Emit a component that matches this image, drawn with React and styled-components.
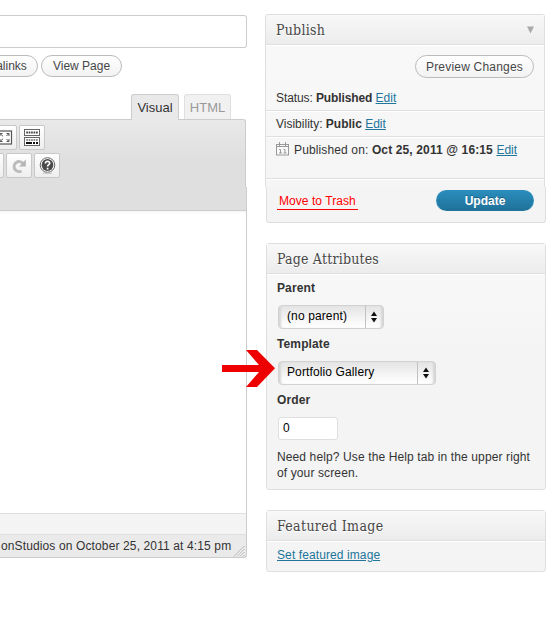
import React from 'react';
import styled, { createGlobalStyle } from 'styled-components';

const Global = createGlobalStyle`
  *, *::before, *::after { box-sizing: border-box; }
  body { margin: 0; background: #fff; }
`;

const Page = styled.main`
  position: relative;
  display: flex;
  align-items: flex-start;
  width: 556px;
  height: 624px;
  overflow: hidden;
  background: #fff;
  color: #333;
  font: 12px/16px 'Liberation Sans', Arial, sans-serif;
`;

const EditorColumn = styled.section`
  width: 247px;
  padding-top: 15px;
`;

const TitleField = styled.div`
  height: 33px;
  border: 1px solid #ccc;
  border-left: 0;
  border-radius: 0 3px 3px 0;
  background: #fff;
`;

const PermalinkRow = styled.div`
  display: flex;
  gap: 3px;
  margin-top: 7px;
  height: 22px;
`;

const PillButton = styled.button`
  flex: none;
  width: ${(p) => p.$width}px;
  height: ${(p) => p.$height || 22}px;
  margin-left: ${(p) => p.$offset || 0}px;
  padding: 0;
  border: 1px solid #bbb;
  border-radius: 12px;
  background: linear-gradient(#fff, #f2f2f2);
  color: #464646;
  font: inherit;
  line-height: 20px;
  letter-spacing: ${(p) => p.$spacing || 0}px;
  text-shadow: 0 1px 0 #fff;
  white-space: nowrap;
`;

const Tabs = styled.div`
  display: flex;
  gap: 5px;
  margin-top: 17px;
  padding-left: 131px;
`;

const Tab = styled.div`
  width: ${(p) => p.$width}px;
  height: ${(p) => (p.$active ? 26 : 25)}px;
  margin-bottom: ${(p) => (p.$active ? -1 : 0)}px;
  border: 1px solid ${(p) => (p.$active ? '#ccc' : '#dfdfdf')};
  border-bottom: 0;
  border-radius: 3px 3px 0 0;
  background: ${(p) => (p.$active ? '#e9e9e9' : '#f1f1f1')};
  color: ${(p) => (p.$active ? '#333' : '#999')};
  font-size: 13px;
  line-height: 25px;
  text-align: center;
  z-index: 1;
`;

const Toolbar = styled.div`
  width: 246px;
  height: 68px;
  padding-top: 5px;
  border-top: 1px solid #ccc;
  border-right: 1px solid #ccc;
  border-radius: 0 3px 0 0;
  background: linear-gradient(#e9e9e9, #dfdfdf 60%);
`;

const ToolRow = styled.div`
  display: flex;
  gap: 2px;
  height: 28px;
  margin-left: ${(p) => p.$offset}px;
`;

const Tool = styled.button`
  display: flex;
  align-items: center;
  justify-content: center;
  flex: none;
  width: 26px;
  height: 25px;
  padding: 0;
  border: 1px solid #c8c8c8;
  border-radius: 2px;
  background: linear-gradient(#fff, #eee);
  svg { display: block; }
`;

const ToolbarFoot = styled.div`
  height: 24px;
  border-right: 1px solid #ccc;
  border-bottom: 1px solid #ccc;
  background: #dfdfdf;
`;

const Canvas = styled.div`
  height: 302px;
  border-right: 1px solid #ccc;
  background: linear-gradient(#f5f5f5, #fff 3px);
`;

const PathBar = styled.div`
  height: 21px;
  border-top: 1px solid #dfdfdf;
  border-right: 1px solid #ccc;
  background: #f4f4f4;
`;

const StatusBar = styled.div`
  display: flex;
  justify-content: space-between;
  height: 24px;
  padding-left: 1px;
  border: 1px solid #ccc;
  border-top-color: #dfdfdf;
  border-left: 0;
  border-radius: 0 0 3px 0;
  background: #eaeaea;
  line-height: 23px;
  letter-spacing: 0.125px;
  white-space: nowrap;
  svg { flex: none; align-self: flex-end; margin: 0 1px 0 0; }
`;

const Sidebar = styled.aside`
  display: flex;
  flex-direction: column;
  gap: 20px;
  width: 281px;
  margin-left: 18px;
  padding-top: 14px;
`;

const Panel = styled.section`
  width: 280px;
  height: ${(p) => p.$height}px;
  margin-left: 1px;
  border: 1px solid #dfdfdf;
  border-radius: 3px;
  background: linear-gradient(#f9f9f9, #f4f4f4 45%);
`;

const PublishPanel = styled.section`
  display: flex;
  flex-direction: column;
`;

const PublishBody = styled.div`
  width: 280px;
  height: 173px;
  border: 1px solid #dfdfdf;
  border-bottom: 0;
  border-radius: 3px 3px 0 0;
  background: linear-gradient(#f9f9f9, #f5f5f5);
`;

const PublishFoot = styled.div`
  display: flex;
  justify-content: space-between;
  width: 280px;
  height: 36px;
  margin-left: 1px;
  padding: 3px 11px 0 10px;
  border: 1px solid #dfdfdf;
  border-top: 0;
  border-radius: 0 0 3px 3px;
  background: #f4f4f4;
`;

const PanelHead = styled.header`
  display: flex;
  align-items: center;
  justify-content: space-between;
  height: 30px;
  padding: 0 9px 0 10px;
  border-bottom: 1px solid #dfdfdf;
  background: linear-gradient(#f8f8f8, #ececec);
  box-shadow: 0 1px 0 #fff;
`;

const Heading = styled.h3`
  margin: 2px 0 0;
  color: #464646;
  font: 400 14px/27px 'DejaVu Serif Condensed', 'DejaVu Serif', Georgia, serif;
  font-stretch: condensed;
  letter-spacing: ${(p) => p.$spacing}px;
  text-shadow: 0 1px 0 #fff;
  white-space: nowrap;
`;

const PreviewRow = styled.div`
  display: flex;
  justify-content: flex-end;
  height: 40px;
  padding: 10px 10px 0 0;
`;

const InfoRow = styled.div`
  display: flex;
  align-items: flex-start;
  height: ${(p) => p.$height}px;
  padding: 5px 0 0 10px;
  border-bottom: 1px solid #dfdfdf;
  box-shadow: 0 1px 0 #fff;
  letter-spacing: ${(p) => p.$spacing || 0}px;
  white-space: pre;
  svg { flex: none; margin-right: 5px; }
`;

const Link = styled.a`
  color: #21759b;
  text-decoration: underline;
  letter-spacing: ${(p) => p.$spacing || 0}px;
`;

const TrashLink = styled.a`
  height: 20px;
  padding: 0 2px;
  border-bottom: 1px solid #f00;
  color: #f00;
  line-height: 22px;
  letter-spacing: 0.06px;
`;

const UpdateButton = styled.button`
  width: 98px;
  height: 21px;
  padding: 0;
  border: 1px solid #298cba;
  border-color: #298cba #298cba #1f769d;
  border-radius: 11px;
  background: linear-gradient(#2a8dbc, #20719a);
  color: #fff;
  font: bold 12px/20px 'Liberation Sans', Arial, sans-serif;
  text-shadow: 0 -1px 0 rgba(0, 0, 0, 0.3);
`;

const Fields = styled.div`
  display: flex;
  flex-direction: column;
  align-items: flex-start;
  padding: 6px 10px;
`;

const Label = styled.label`
  font-weight: bold;
  line-height: 16px;
  letter-spacing: 0.12px;
`;

const SelectBox = styled.div`
  display: flex;
  width: ${(p) => p.$width}px;
  height: 24px;
  margin: 9px 0 7px 1px;
  border: 1px solid #d2d2d2;
  border-radius: 4px;
  background: linear-gradient(#e4e4e4, #f8f8f8 70%, #fff);
  box-shadow: inset 3px 0 2px -1px #d6d6d6, inset -3px 0 2px -1px #d6d6d6;
  color: #000;
  line-height: 21px;
`;

const SelectText = styled.span`
  flex: 1;
  padding-left: 8px;
  letter-spacing: 0.12px;
  white-space: nowrap;
`;

const SelectArrows = styled.span`
  display: flex;
  align-items: center;
  justify-content: center;
  width: 18px;
  padding-right: 1px;
  border-left: 1px solid #c2c2c2;
`;

const OrderInput = styled.div`
  width: 60px;
  height: 23px;
  margin: 9px 0 9px 1px;
  padding-left: 4px;
  border: 1px solid #dfdfdf;
  border-radius: 3px;
  background: #fff;
  color: #000;
  line-height: 20px;
`;

const Help = styled.p`
  margin: 0;
  letter-spacing: 0.12px;
  white-space: nowrap;
`;

const Feature = styled.div`
  padding: 6px 10px;
`;

const Pointer = styled.svg`
  position: absolute;
  left: 222px;
  top: 350px;
`;

function Arrows() {
  return (
    <svg width="6" height="12" viewBox="0 0 6 12">
      <path d="M3 0.5 6 5H0zM3 11.5 0 7h6z" fill="#111" />
    </svg>
  );
}

function FullscreenIcon() {
  return (
    <svg width="17" height="17" viewBox="0 0 17 17" fill="none" stroke="#555">
      <rect x="1.5" y="2" width="14" height="13" strokeWidth="1.2" fill="#fff" />
      <path d="M4 7V4.5h2.5M10.5 4.5H13V7M4 10v2.5h2.5M10.5 12.5H13V10M4.3 4.8 7 7.3M12.7 4.8 10.5 7M4.3 12.2 7 9.8M12.7 12.2 10.5 10" />
    </svg>
  );
}

function KitchenSinkIcon() {
  return (
    <svg width="16" height="17" viewBox="0 0 16 17">
      <rect x="0.5" y="0.5" width="15" height="6" fill="#fff" stroke="#666" />
      <path d="M2.2 3.5h11.6" stroke="#444" strokeWidth="1.8" strokeDasharray="1.7 .75" />
      <rect x="0.5" y="8.5" width="15" height="8" fill="#fff" stroke="#666" />
      <path d="M2.2 11h11.6" stroke="#666" strokeWidth="1.6" strokeDasharray="1.7 .75" />
      <path d="M2 14h6M9 14h2M12 14h2" stroke="#111" strokeWidth="1.8" />
    </svg>
  );
}

function RedoIcon() {
  return (
    <svg width="16" height="16" viewBox="0 0 16 16">
      <path d="M10.5 13A5 5 0 1 1 12 5.4" fill="none" stroke="#bcbcbc" strokeWidth="3" />
      <path d="M14.8 1.5v7H8z" fill="#b5b5b5" />
    </svg>
  );
}

function HelpIcon() {
  return (
    <svg width="17" height="17" viewBox="0 0 17 17">
      <circle cx="8.5" cy="8" r="7.3" fill="#fff" stroke="#666" />
      <circle cx="8.5" cy="8" r="5.9" fill="#4a4a4a" />
      <path d="M6.4 6.5C6.3 3.7 10.8 3.8 10.7 6.2 10.6 7.7 8.6 7.7 8.6 9.5M8.6 10.8v1.7" fill="none" stroke="#fff" strokeWidth="1.7" />
      <path d="M4 16.2h9" stroke="#bbb" />
    </svg>
  );
}

function CalendarIcon() {
  return (
    <svg width="13" height="14" viewBox="0 0 13 14" fill="none" stroke="#999">
      <rect x="0.5" y="2.5" width="12" height="10.5" fill="#fafafa" />
      <path d="M1 4.5h11M3.5 0v4M9.5 0v4" />
      <path d="M3 7.5h1.5v3.5M3 11h3M7.5 7.5H9v3.5M7.5 11h3" />
    </svg>
  );
}

function ResizeGrip() {
  return (
    <svg width="12" height="12" viewBox="0 0 12 12" fill="none">
      <path d="M1 11.5 11.5 1M4 11.5 11.5 4M7 11.5 11.5 7M10 11.5 11.5 10" stroke="#aaa" />
      <path d="M2.2 11.5 11.5 2.2M5.2 11.5 11.5 5.2M8.2 11.5 11.5 8.2" stroke="#fff" strokeWidth=".8" />
    </svg>
  );
}

function Select({ width, children }) {
  return (
    <SelectBox $width={width}>
      <SelectText>{children}</SelectText>
      <SelectArrows><Arrows /></SelectArrows>
    </SelectBox>
  );
}

export default function App() {
  return (
    <>
      <Global />
      <Page>
        <EditorColumn>
          <TitleField />
          <PermalinkRow>
            <PillButton $width={127} $offset={-89}>Change Permalinks</PillButton>
            <PillButton $width={81}>View Page</PillButton>
          </PermalinkRow>
          <Tabs>
            <Tab $active $width={48}>Visual</Tab>
            <Tab $width={47}>HTML</Tab>
          </Tabs>
          <Toolbar>
            <ToolRow $offset={-9}>
              <Tool aria-label="Fullscreen"><FullscreenIcon /></Tool>
              <Tool aria-label="Kitchen sink"><KitchenSinkIcon /></Tool>
            </ToolRow>
            <ToolRow $offset={-22}>
              <Tool aria-label="Undo" />
              <Tool aria-label="Redo"><RedoIcon /></Tool>
              <Tool aria-label="Help"><HelpIcon /></Tool>
            </ToolRow>
          </Toolbar>
          <ToolbarFoot />
          <Canvas />
          <PathBar />
          <StatusBar>
            <span>onStudios on October 25, 2011 at 4:15 pm</span>
            <ResizeGrip />
          </StatusBar>
        </EditorColumn>

        <Sidebar>
          <PublishPanel>
            <PublishBody>
              <PanelHead>
                <Heading $spacing={0.25}>Publish</Heading>
                <svg width="9" height="8" viewBox="0 0 9 8"><path d="M1 0.5h7L4.5 7.5z" fill="#aaa" /></svg>
              </PanelHead>
              <PreviewRow>
                <PillButton $width={119} $height={23} $spacing={0.2}>Preview Changes</PillButton>
              </PreviewRow>
              <InfoRow $height={26} $spacing={-0.1}>
                <span>Status: <b>Published</b> <Link>Edit</Link></span>
              </InfoRow>
              <InfoRow $height={26}>
                <span>Visibility: <b>Public</b> <Link>Edit</Link></span>
              </InfoRow>
              <InfoRow $height={42} $spacing={0.13}>
                <CalendarIcon />
                <span>Published on: <b>Oct 25, 2011 @ 16:15</b> <Link>Edit</Link></span>
              </InfoRow>
            </PublishBody>
            <PublishFoot>
              <TrashLink>Move to Trash</TrashLink>
              <UpdateButton>Update</UpdateButton>
            </PublishFoot>
          </PublishPanel>

          <Panel $height={247}>
            <PanelHead><Heading $spacing={0.2}>Page Attributes</Heading></PanelHead>
            <Fields>
              <Label>Parent</Label>
              <Select width={106}>(no parent)</Select>
              <Label>Template</Label>
              <Select width={158}>Portfolio Gallery</Select>
              <Label>Order</Label>
              <OrderInput>0</OrderInput>
              <Help>Need help? Use the Help tab in the upper right</Help>
              <Help>of your screen.</Help>
            </Fields>
          </Panel>

          <Panel $height={62}>
            <PanelHead><Heading $spacing={0.35}>Featured Image</Heading></PanelHead>
            <Feature><Link $spacing={0.1}>Set featured image</Link></Feature>
          </Panel>
        </Sidebar>

        <Pointer width="54" height="37" viewBox="0 0 54 37">
          <path d="M0 15h37L24 0h11l18 18.3L35 37H24l13-15H0z" fill="#e00" />
        </Pointer>
      </Page>
    </>
  );
}
